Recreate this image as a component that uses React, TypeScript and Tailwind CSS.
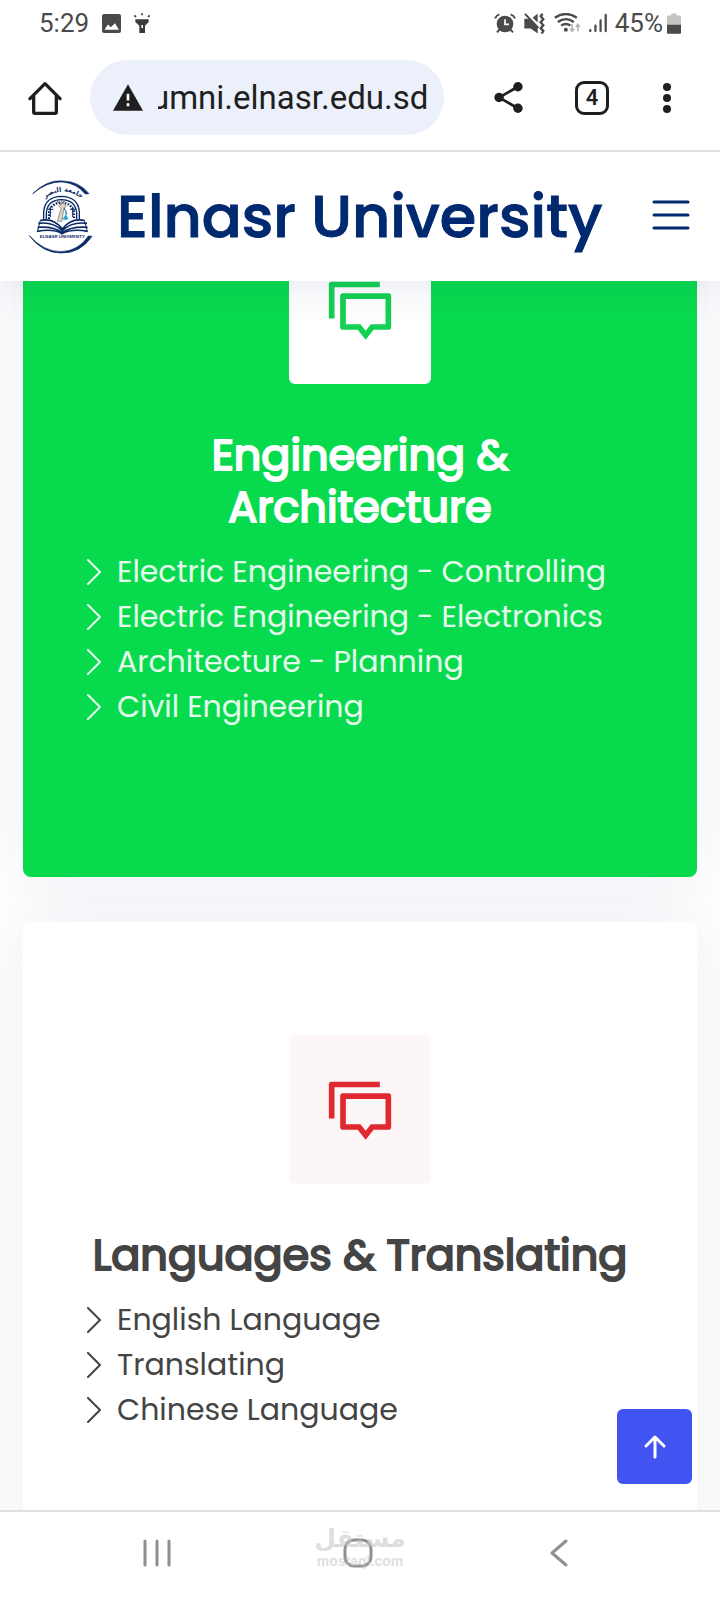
import { useEffect, useRef } from "react";

function AlarmIcon() {
  return (
    <svg viewBox="0 0 66 60" className="h-5 w-[22px]" fill="none" stroke="#4a4a4a" aria-hidden="true">
      <circle cx="33" cy="33" r="25" fill="#4a4a4a" stroke="none" />
      <path d="M33 19v15h12" stroke="#fff" strokeWidth="5" />
      <path d="M3 16Q7 7 16 4M50 4Q59 7 63 16M17 49l-8 9M49 49l8 9" strokeWidth="6" />
    </svg>
  );
}

function MuteIcon() {
  return (
    <svg viewBox="0 0 66 62" className="h-[21px] w-[22px]" fill="#4a4a4a" aria-hidden="true">
      <path d="M1 17h14l26 26v18L20 46H1zM26 14l15-13v27z" />
      <path d="M3 2l40 42" stroke="#4a4a4a" strokeWidth="6" />
      <path d="M56 2l-6 7 8 9-8 9 8 9-8 9 8 8-5 8" fill="none" stroke="#4a4a4a" strokeWidth="7" />
    </svg>
  );
}

function WifiIcon() {
  return (
    <svg viewBox="0 0 80 60" className="h-5 w-[27px]" fill="none" stroke="#4a4a4a" strokeWidth="7" aria-hidden="true">
      <path d="M2 14Q35-8 68 14M11 27Q35 10 59 27M21 38Q35 28 49 38" />
      <circle cx="35" cy="50" r="6" fill="#4a4a4a" stroke="none" />
      <g stroke="#b4b4b4" strokeWidth="5">
        <path d="M54 34v20M48 47l6 8 6-8M71 55V35M65 42l6-8 6 8" />
      </g>
    </svg>
  );
}

function SignalIcon() {
  return (
    <svg viewBox="0 0 56 60" className="h-5 w-[18px]" stroke="#4a4a4a" strokeWidth="7" strokeLinecap="round" aria-hidden="true">
      <path d="M4 52v3M20 38v17M36 22v33M52 5v50" />
    </svg>
  );
}

function BatteryIcon() {
  return (
    <svg viewBox="0 0 42 62" className="h-[21px] w-[14px]" aria-hidden="true">
      <path d="M13 1h16v6h10q3 0 3 3v26H0V10q0-3 3-3h10z" fill="#c4c4c4" />
      <path d="M0 35h42v24q0 3-3 3H3q-3 0-3-3z" fill="#4a4a4a" />
    </svg>
  );
}

function StatusBar() {
  return (
    <div className="flex h-[46px] shrink-0 items-center justify-between px-[39px] font-['Roboto',sans-serif] text-[26px] leading-none text-[#4a4a4a]">
      <div className="flex items-center gap-[13px]">
        <span>5:29</span>
        <svg viewBox="0 0 54 54" className="size-[19px]" aria-hidden="true">
          <rect width="54" height="54" rx="6" fill="#4a4a4a" />
          <path d="M7 45l10-15 8 8 12-12 11 19z" fill="#fff" />
        </svg>
        <svg viewBox="0 0 48 60" className="h-5 w-4" fill="#3a3a3a" aria-hidden="true">
          <path d="M4 19h40v8L33 38v22H16V38L4 27z" />
          <path d="M22 36h5v9h-5z" fill="#fff" />
          <path d="M1 7l5 5M24 1v6M47 7l-5 5" stroke="#3a3a3a" strokeWidth="5" />
        </svg>
      </div>
      <div className="flex items-center gap-2">
        <AlarmIcon />
        <MuteIcon />
        <WifiIcon />
        <SignalIcon />
        <div className="flex items-center gap-1">
          <span>45%</span>
          <BatteryIcon />
        </div>
      </div>
    </div>
  );
}

function AddressBar() {
  const field = useRef<HTMLInputElement>(null);

  useEffect(() => {
    const el = field.current;
    if (el) el.scrollLeft = el.scrollWidth;
  }, []);

  return (
    <div className="relative z-20 flex h-[106px] shrink-0 items-center border-b-2 border-[#e0e0e0] bg-white pb-px pl-7 pr-12 text-[#1f1f1f]">
      <button type="button" aria-label="Home" className="shrink-0">
        <svg viewBox="0 0 102 102" className="size-[34px]" fill="none" stroke="#1f1f1f" strokeWidth="10" strokeLinecap="round" strokeLinejoin="round" aria-hidden="true">
          <path d="M6 53L51 8l45 45M17 45v48q0 4 4 4h60q4 0 4-4V45" />
        </svg>
      </button>
      <label className="ml-7 flex h-[75px] min-w-0 flex-1 items-center rounded-full bg-[#ebf0fa] pl-[23px] pr-4">
        <svg viewBox="0 0 90 80" className="h-[27px] w-[30px] shrink-0" fill="#1f1f1f" aria-hidden="true">
          <path d="M45 0l45 80H0z" />
          <path d="M41 29h8v20h-8zM41 57h8v9h-8z" fill="#fff" />
        </svg>
        <input
          ref={field}
          aria-label="Address"
          defaultValue="alumni.elnasr.edu.sd"
          className="ml-[15px] w-full min-w-0 bg-transparent font-['Roboto',sans-serif] text-[33px] outline-none"
        />
      </label>
      <button type="button" aria-label="Share" className="ml-[50px] shrink-0">
        <svg viewBox="0 0 86 92" className="h-[31px] w-[29px]" fill="#1f1f1f" aria-hidden="true">
          <path d="M71 14L15 46l56 32" fill="none" stroke="#1f1f1f" strokeWidth="8" />
          <circle cx="71" cy="14" r="14" />
          <circle cx="15" cy="46" r="14" />
          <circle cx="71" cy="78" r="14" />
        </svg>
      </button>
      <button
        type="button"
        aria-label="4 open tabs"
        className="ml-[52px] flex size-[34px] shrink-0 items-center justify-center rounded-[9px] border-[3px] border-[#1f1f1f] font-['Roboto',sans-serif] text-[22px] font-semibold leading-none"
      >
        4
      </button>
      <button type="button" aria-label="More" className="ml-[53px] shrink-0">
        <svg viewBox="0 0 10 34" className="h-[34px] w-[10px]" fill="#1f1f1f" aria-hidden="true">
          <circle cx="5" cy="6" r="4" />
          <circle cx="5" cy="17" r="4" />
          <circle cx="5" cy="28" r="4" />
        </svg>
      </button>
    </div>
  );
}

function UniversityLogo() {
  return (
    <svg viewBox="0 0 270 270" className="size-[90px] shrink-0" fill="none" stroke="#0b2a66" role="img" aria-label="Elnasr University logo">
      <defs>
        <path id="logo-arc" d="M60 92Q127 26 200 92" />
      </defs>
      <path d="M38 65Q82 22 129 27Q179 29 207 65L196 66Q168 33 128 30Q84 27 38 65z" fill="#0b2a66" stroke="#0b2a66" strokeWidth="2" />
      <path d="M28 191Q66 242 122 243Q181 245 216 193L205 192Q175 237 123 239Q72 239 28 191z" fill="#0b2a66" stroke="#0b2a66" strokeWidth="2" />
      <text fill="#0b2a66" stroke="none" className="font-['DejaVu_Sans',sans-serif] text-[20px] font-bold">
        <textPath href="#logo-arc" startOffset="50%" textAnchor="middle">جامعة النصر</textPath>
      </text>
      <path d="M71 142v-23q4-45 53-46 50 1 54 46v23M79 142v-20q4-38 45-39 42 1 46 39v20" strokeWidth="4" />
      <path d="M87 141v-20q7-28 37-29 31 1 38 29v20" strokeWidth="7" strokeDasharray="5 4" />
      <path d="M83 112h17M91 104v31M150 112h17M158 104v31" strokeWidth="3" />
      <path d="M126 88l-10 13 7 8-11 39h14l5-37 8-8z" fill="#d8d4c8" stroke="#77736b" strokeWidth="2" />
      <path d="M109 85l13 12 16-13M132 107l9 20" stroke="#555" strokeWidth="3" />
      <path d="M136 113v15l-8 13q9 6 17 0l-6-13v-15z" fill="#35a5d8" stroke="none" />
      <path d="M61 145q41-8 66 26 25-34 66-26M55 154q43-6 72 22 28-28 74-22M53 166q46-4 74 16 28-20 76-16M51 178q49-9 75 7 30-16 77-7" strokeWidth="5" />
      <path d="M61 145l-9 34M193 145l9 34M127 171v14" strokeWidth="3" />
      <text x="127" y="199" textAnchor="middle" fill="#0b2a66" stroke="none" className="font-['Liberation_Sans',sans-serif] text-[13px] font-bold">
        ELNASR UNIVERSITY
      </text>
    </svg>
  );
}

function SiteHeader() {
  return (
    <header className="relative z-10 flex h-[129px] shrink-0 items-center bg-white pl-5 pr-[30px] shadow-[0_4px_45px_rgba(1,41,112,0.1)]">
      <a href="#top" className="flex items-center gap-[7px]">
        <UniversityLogo />
        <span className="whitespace-nowrap font-['Poppins','Inter',sans-serif] text-[59px] font-medium leading-none text-[#012970] [-webkit-text-stroke:1px_currentColor]">
          Elnasr University
        </span>
      </a>
      <button type="button" aria-label="Menu" className="ml-auto pb-1">
        <svg viewBox="0 0 38 30" className="h-[30px] w-[38px]" stroke="#012970" strokeWidth="3" strokeLinecap="round" aria-hidden="true">
          <path d="M2 2h34M2 15h34M2 28h34" />
        </svg>
      </button>
    </header>
  );
}

function DiscussIcon() {
  return (
    <svg viewBox="0 0 24 24" className="size-[68px]" fill="currentColor" aria-hidden="true">
      <path d="M14 22.5L11.2 19H6a1 1 0 0 1-1-1V7.1a1 1 0 0 1 1-1h16a1 1 0 0 1 1 1V18a1 1 0 0 1-1 1h-5.2L14 22.5zm1.84-5.5H21V8.1H7V17h5.16L14 19.3 15.84 17zM2 2h17v2H3v11H1V3a1 1 0 0 1 1-1z" />
    </svg>
  );
}

type CardProps = {
  title: string;
  programs: string[];
  cardClass: string;
  boxClass: string;
  itemClass: string;
};

function FacultyCard({ title, programs, cardClass, boxClass, itemClass }: CardProps) {
  return (
    <article className={`rounded-lg px-[63px] pb-[148px] pt-[113px] shadow-[0_0_68px_rgba(1,41,112,0.08)] ${cardClass}`}>
      <div className={`mx-auto flex h-[149px] w-[142px] items-center justify-center rounded-md ${boxClass}`}>
        <DiscussIcon />
      </div>
      <h2 className="mt-[45px] text-center text-[43px] font-normal leading-[52px] [-webkit-text-stroke:2px_currentColor]">{title}</h2>
      <ul className="mt-4">
        {programs.map((name) => (
          <li key={name} className={`flex h-[45px] items-center gap-4 whitespace-nowrap text-[30px] leading-[45px] ${itemClass}`}>
            <svg viewBox="0 0 15 26" className="h-[26px] w-[15px] shrink-0" fill="none" stroke="currentColor" strokeWidth="2" strokeLinecap="round" strokeLinejoin="round" aria-hidden="true">
              <path d="M2 1l12 12L2 25" />
            </svg>
            {name}
          </li>
        ))}
      </ul>
    </article>
  );
}

function NavigationBar() {
  return (
    <nav aria-label="System" className="relative grid h-[90px] shrink-0 grid-cols-3 items-center justify-items-center border-t-2 border-[#e0e0e0] bg-white pb-[6px] pl-14 pr-[60px]">
      <button type="button" aria-label="Recent apps">
        <svg viewBox="0 0 28 28" className="size-7" stroke="#8f8f8f" strokeWidth="3" strokeLinecap="round" aria-hidden="true">
          <path d="M2 2v24M14 2v24M26 2v24" />
        </svg>
      </button>
      <button type="button" aria-label="Home screen">
        <svg viewBox="0 0 30 30" className="size-[30px]" fill="none" stroke="#8f8f8f" strokeWidth="3" aria-hidden="true">
          <rect x="2" y="2" width="26" height="26" rx="9" />
        </svg>
      </button>
      <button type="button" aria-label="Back">
        <svg viewBox="0 0 18 28" className="h-7 w-[18px]" fill="none" stroke="#8f8f8f" strokeWidth="3" strokeLinecap="round" strokeLinejoin="round" aria-hidden="true">
          <path d="M16 2L2 14l14 12" />
        </svg>
      </button>
      <div className="pointer-events-none absolute inset-x-0 top-3 flex flex-col items-center text-[#c8c8c8]/60">
        <span lang="ar" dir="rtl" className="font-['DejaVu_Sans',sans-serif] text-[25px] font-bold leading-[30px]">مستقل</span>
        <span className="font-['Liberation_Sans',sans-serif] text-[14px] font-bold leading-[14px]">mostaql.com</span>
      </div>
    </nav>
  );
}

export default function App() {
  return (
    <div className="flex h-screen flex-col overflow-hidden bg-white">
      <StatusBar />
      <AddressBar />
      <SiteHeader />
      <main className="relative min-h-0 flex-1 overflow-hidden px-[23px] font-['Poppins','Inter',sans-serif]">
        <div className="-mt-[159px] flex flex-col gap-[45px]">
          <FacultyCard
            title="Engineering & Architecture"
            programs={[
              "Electric Engineering - Controlling",
              "Electric Engineering - Electronics",
              "Architecture - Planning",
              "Civil Engineering",
            ]}
            cardClass="bg-[#08da4e] text-white"
            boxClass="bg-white text-[#14d053]"
            itemClass="text-white/90"
          />
          <FacultyCard
            title="Languages & Translating"
            programs={["English Language", "Translating", "Chinese Language"]}
            cardClass="bg-white text-[#444444]"
            boxClass="bg-[#fdf6f6] text-[#df2830]"
            itemClass="text-[#444444]"
          />
        </div>
        <a href="#top" aria-label="Back to top" className="absolute bottom-[26px] right-7 flex size-[75px] items-center justify-center rounded-md bg-[#4154f1]">
          <svg viewBox="0 0 24 26" className="h-[26px] w-6" fill="none" stroke="#fff" strokeWidth="3" strokeLinecap="round" strokeLinejoin="round" aria-hidden="true">
            <path d="M12 23V3M3 12l9-9 9 9" />
          </svg>
        </a>
      </main>
      <NavigationBar />
    </div>
  );
}
